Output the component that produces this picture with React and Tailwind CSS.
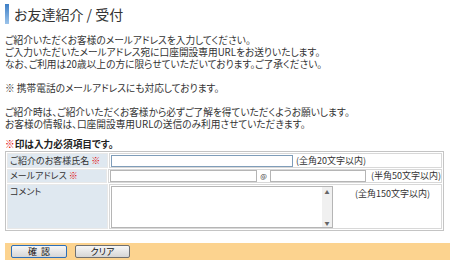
import React from "react";

const Req = () => <span className="text-[#e00000]">※</span>;

function Btn({ children, focus }) {
  return (
    <div
      className={`flex h-[13px] items-center justify-center rounded-[2px] border bg-gradient-to-b from-[#f7f7f7] to-[#d6d6d6] text-[9px] leading-none text-[#111] ${
        focus ? "w-[56px] border-[#2d6fb8]" : "w-[55px] border-[#707070]"
      }`}
    >
      {children}
    </div>
  );
}

export default function App() {
  return (
    <div
      className="w-[450px] h-[263px] overflow-hidden bg-white text-[#333] [font-feature-settings:'palt']"
      style={{ fontFamily: '"Noto Sans CJK JP", sans-serif' }}
    >
      <div className="flex items-center gap-[5px] pl-[5px] pt-[4px]">
        <div className="h-[20px] w-[4px] bg-gradient-to-b from-[#3d7fc6] to-[#9cc4ea]" />
        <div className="text-[14px] leading-[20px] text-[#333]">お友達紹介 / 受付</div>
      </div>

      <div className="mt-[10px] pl-[5px] text-[9.7px] leading-[12px] whitespace-nowrap">
        <p>ご紹介いただくお客様のメールアドレスを入力してください。</p>
        <p>ご入力いただいたメールアドレス宛に口座開設専用URLをお送りいたします。</p>
        <p>なお、ご利用は20歳以上の方に限らせていただいております。ご了承ください。</p>
        <p className="mt-[12px]">※ 携帯電話のメールアドレスにも対応しております。</p>
        <p className="mt-[12px]">ご紹介時は、ご紹介いただくお客様から必ずご了解を得ていただくようお願いします。</p>
        <p>お客様の情報は、口座開設専用URLの送信のみ利用させていただきます。</p>
        <p className="mt-[8px] font-bold text-[#222]">
          <Req />印は入力必須項目です。
        </p>
      </div>

      <div className="ml-[5px] mt-[1px] w-[439px] border border-[#c4c4c4] bg-white p-[1px] text-[9px] leading-[12px] whitespace-nowrap">
        <div className="flex h-[15px] gap-[1px]">
          <div className="flex w-[101px] items-center bg-[#dfe8f0] pl-[2px] border border-[#e8e8e8]">
            ご紹介のお客様氏名&nbsp;<Req />
          </div>
          <div className="flex flex-1 items-center gap-[3px] pl-[1px] border border-[#d8d8d8]">
            <div className="h-[12px] w-[182px] shrink-0 border border-[#7f9db9] bg-white" />
            <span>(全角20文字以内)</span>
          </div>
        </div>
        <div className="mt-[1px] flex h-[14px] gap-[1px]">
          <div className="flex w-[101px] items-center bg-[#dfe8f0] pl-[2px] border border-[#e8e8e8]">
            メールアドレス&nbsp;<Req />
          </div>
          <div className="flex flex-1 items-center pl-[1px] border border-[#d8d8d8]">
            <div className="h-[12px] w-[147px] shrink-0 border border-[#b5b5b5] bg-white" />
            <span className="mx-[3px] text-[7px]">@</span>
            <div className="h-[12px] w-[96px] shrink-0 border border-[#b5b5b5] bg-white" />
            <span className="ml-[5px]">(半角50文字以内)</span>
          </div>
        </div>
        <div className="mt-[1px] flex h-[45px] gap-[1px]">
          <div className="w-[101px] bg-[#dfe8f0] pl-[2px] pt-[1px] border border-[#e8e8e8]">コメント</div>
          <div className="flex flex-1 items-start pl-[1px] pt-[1px] border border-[#d8d8d8]">
            <div className="flex h-[42px] w-[222px] shrink-0 border border-[#b5b5b5] bg-white">
              <div className="flex-1" />
              <div className="flex w-[10px] flex-col items-center justify-between bg-[#f0f0f0] py-[2px]">
                <span className="text-[5px] leading-none text-[#666]">▲</span>
                <span className="text-[5px] leading-none text-[#666]">▼</span>
              </div>
            </div>
            <span className="ml-[22px] mt-[2px]">(全角150文字以内)</span>
          </div>
        </div>
      </div>

      <div className="ml-[5px] mt-[12px] flex h-[17px] items-center gap-[8px] bg-[#fcd38f] pl-[6px]">
        <Btn focus>確&nbsp;&nbsp;認</Btn>
        <Btn>クリア</Btn>
      </div>
    </div>
  );
}
